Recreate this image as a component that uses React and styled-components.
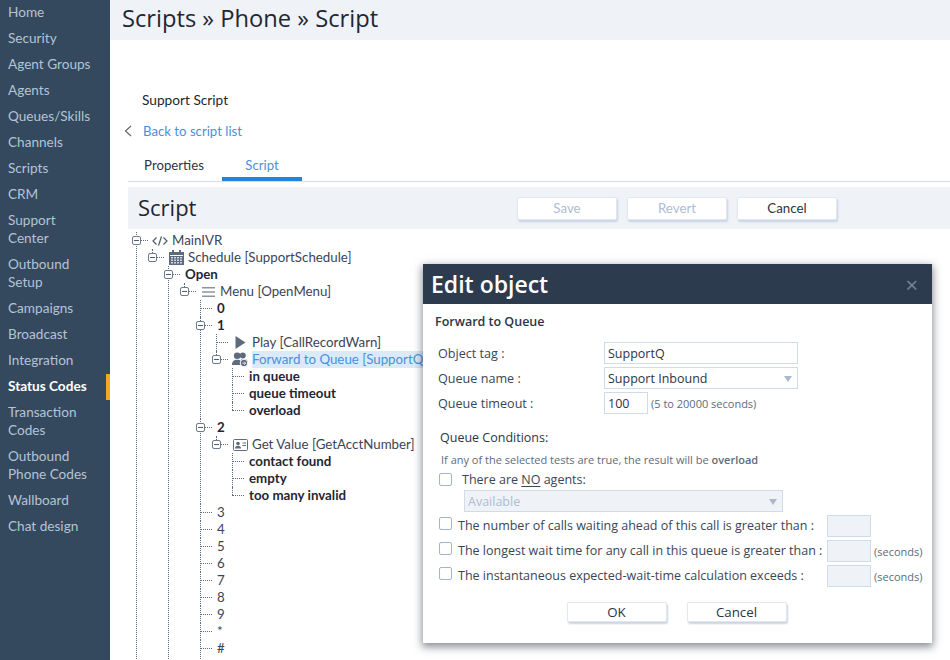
import styled, { createGlobalStyle } from 'styled-components';

const GlobalStyle = createGlobalStyle`
  html, body {
    margin: 0;
    height: 660px;
    overflow: hidden;
    background: #fff;
    font-family: "Open Sans", "Noto Sans", sans-serif;
    color: #2b3445;
  }
  * { box-sizing: border-box; }
`;

const Page = styled.div`
  display: flex;
  width: 950px;
  height: 660px;
  overflow: hidden;
  position: relative;
`;

const Sidebar = styled.nav`
  flex: 0 0 110px;
  background: #34495e;
  font-family: Lato, "Open Sans", sans-serif;
`;

const SideItem = styled.div`
  padding: 3px 8px 5px;
  font-size: 13.6px;
  line-height: 18px;
  color: ${(p) => (p.$active ? '#fff' : '#b4c3d6')};
  font-weight: ${(p) => (p.$active ? 700 : 400)};
  border-right: 4px solid ${(p) => (p.$active ? '#f5a623' : 'transparent')};
`;

const Main = styled.main`
  flex: 1;
  min-width: 0;
  font-family: Lato, "Open Sans", sans-serif;
`;

const Header = styled.header`
  height: 40px;
  background: #eff2f7;
  padding-left: 12px;
  font-family: "Open Sans", sans-serif;
  font-size: 23.7px;
  line-height: 37px;
  color: #1f2733;
`;

const Content = styled.div`
  padding: 51px 0 0 18px;
`;

const ScriptName = styled.div`
  font-size: 13.7px;
  line-height: 18px;
  margin-left: 14px;
  color: #1f2733;
`;

const BackLink = styled.a`
  display: flex;
  align-items: center;
  gap: 11px;
  margin: 13px 0 0 -4px;
  font-size: 13.2px;
  line-height: 18px;
  color: #4a8fe0;
`;

const Tabs = styled.div`
  display: flex;
  gap: 8px;
  margin-top: 12px;
  padding-left: 6px;
  height: 30px;
  border-bottom: 1px solid #d5dce6;
`;

const Tab = styled.div`
  width: 80px;
  height: 29px;
  text-align: center;
  font-size: 13.2px;
  line-height: 27px;
  color: ${(p) => (p.$active ? '#4a8fe0' : '#2b3445')};
  border-bottom: 4px solid ${(p) => (p.$active ? '#2185e0' : 'transparent')};
`;

const ScriptBar = styled.div`
  display: flex;
  align-items: center;
  height: 42px;
  margin-top: 5px;
  padding-left: 10px;
  background: #eff2f7;
`;

const ScriptTitle = styled.h2`
  margin: 0 0 3px 0;
  width: 379px;
  font-family: "Open Sans", sans-serif;
  font-size: 22px;
  font-weight: 400;
  color: #1f2733;
`;

const ButtonRow = styled.div`
  display: flex;
  gap: ${(p) => p.$gap || 10}px;
`;

const Button = styled.button`
  width: 100px;
  height: ${(p) => p.$height || 23}px;
  padding: 0;
  border: 1px solid #e3e8ef;
  border-radius: 2px;
  background: #fff;
  box-shadow: 1px 2px 2px #c9d3e2;
  font-family: inherit;
  font-size: 13.3px;
  color: ${(p) => (p.disabled ? '#aebdd2' : '#2b3445')};
`;

const Tree = styled.ul`
  list-style: none;
  margin: 3px 0 0 8px;
  padding: 0;
`;

const Branch = styled.ul`
  list-style: none;
  margin: 0;
  padding: 0 0 0 16px;
`;

const Node = styled.li`
  position: relative;
  padding-bottom: ${(p) => (p.$tail ? '12px' : '0')};

  &::before {
    content: '';
    position: absolute;
    left: 0;
    top: 0;
    bottom: ${(p) => (p.$last ? 'auto' : '0')};
    height: ${(p) => (p.$last ? '8px' : 'auto')};
    border-left: 1px dotted #5d6b7c;
  }
`;

const Row = styled.div`
  position: relative;
  display: flex;
  align-items: center;
  height: 17px;
  padding-left: 17px;
  white-space: nowrap;

  &::after {
    content: '';
    position: absolute;
    left: 0;
    top: 8px;
    width: 12px;
    border-top: 1px dotted #5d6b7c;
  }
`;

const Toggle = styled.span`
  position: absolute;
  z-index: 1;
  left: -4px;
  top: 4px;
  width: 9px;
  height: 9px;
  background: #fff;
  border: 1px solid #6d7b8c;
  border-radius: 2px;

  &::after {
    content: '';
    position: absolute;
    left: 1px;
    right: 1px;
    top: 3px;
    border-top: 1px solid #4e5b6b;
  }
`;

const IconSlot = styled.span`
  display: flex;
  align-items: center;
  justify-content: center;
  flex: 0 0 16px;
  margin-right: 4px;
  margin-left: -1px;
`;

const Label = styled.span`
  font-size: 13.3px;
  line-height: 17px;
  font-weight: ${(p) => (p.$bold ? 700 : 400)};
  color: ${(p) => (p.$selected ? '#4a8fe0' : p.$bold ? '#1f2733' : '#3a4556')};
  background: ${(p) => (p.$selected ? '#dbe9f8' : 'transparent')};
`;

const Modal = styled.section`
  position: absolute;
  left: 423px;
  top: 264px;
  width: 509px;
  height: 379px;
  background: #fff;
  box-shadow: 0 3px 8px 1px rgba(40, 50, 65, 0.55);
`;

const ModalHeader = styled.header`
  display: flex;
  align-items: center;
  justify-content: space-between;
  height: 40px;
  padding: 0 14px 0 8px;
  background: #2c3b4e;
  color: #fff;
  font-size: 23px;
  font-weight: 600;
`;

const CloseMark = styled.span`
  font-size: 22px;
  font-weight: 400;
  color: #76869a;
`;

const ModalBody = styled.div`
  padding: 9px 12px 0;
`;

const ModalTitle = styled.h3`
  margin: 0 0 12px;
  font-size: 12.5px;
  line-height: 17px;
  font-weight: 600;
  color: #2b3445;
`;

const FieldRow = styled.div`
  display: flex;
  align-items: center;
  height: 22px;
  margin: 0 0 3px 3px;
`;

const FieldLabel = styled.label`
  flex: 0 0 166px;
  font-size: 12.6px;
  color: #3a4556;
`;

const TextField = styled.input`
  width: ${(p) => p.$width}px;
  height: 22px;
  padding: 0 3px;
  border: 1px solid #d0dbe8;
  background: ${(p) => (p.disabled ? '#eff2f7' : '#fff')};
  font-family: inherit;
  font-size: 12.5px;
  color: #2b3445;
`;

const SelectBox = styled.div`
  position: relative;
  width: ${(p) => p.$width}px;
  height: 22px;
  padding: 0 3px;
  border: 1px solid #d0dbe8;
  background: ${(p) => (p.$disabled ? '#eff2f7' : '#fff')};
  font-size: 12.5px;
  line-height: 22px;
  color: ${(p) => (p.$disabled ? '#aebdd2' : '#2b3445')};

  &::after {
    content: '';
    position: absolute;
    right: 5px;
    top: 8px;
    border-left: 4px solid transparent;
    border-right: 4px solid transparent;
    border-top: 6px solid #a9b8cc;
  }
`;

const Hint = styled.span`
  margin-left: 3px;
  font-size: 11px;
  color: #5d6b7c;
`;

const ConditionsTitle = styled.div`
  margin: 15px 0 0 5px;
  font-size: 12.5px;
  line-height: 17px;
  color: #2b3445;
`;

const ConditionsNote = styled.div`
  margin: 7px 0 0 6px;
  font-size: 11px;
  line-height: 14px;
  color: #5d6b7c;

  b {
    font-weight: 600;
  }
`;

const Check = styled.span`
  display: block;
  width: 13px;
  height: 13px;
  border: 1px solid #a3b5cc;
  border-radius: 2px;
  background: #fff;
`;

const AgentRow = styled.div`
  display: flex;
  align-items: center;
  gap: 10px;
  height: 18px;
  margin: 3px 0 0 4px;
  font-size: 12.5px;
  color: #3a4556;

  u {
    text-underline-offset: 2px;
  }
`;

const AgentSelect = styled.div`
  margin: 2px 0 3px 29px;
`;

const ConditionGrid = styled.div`
  display: grid;
  grid-template-columns: 19px 369px 44px auto;
  grid-auto-rows: 22px;
  row-gap: 3px;
  align-items: center;
  margin-left: 4px;
  font-size: 12.5px;
  color: #3a4556;
  white-space: nowrap;
`;

const CheckCell = styled.span`
  align-self: start;
  padding-top: 2px;
`;

const ConditionText = styled.span`
  margin-bottom: 2px;
`;

const ModalActions = styled.div`
  display: flex;
  justify-content: center;
  margin: 15px 2px 0 0;
`;

const CodeIcon = () => (
  <svg width="16" height="12" viewBox="0 0 16 12" fill="none" stroke="#4e5b6b" strokeWidth="1.2">
    <path d="M4.5 2.5 1 6l3.5 3.5M11.5 2.5 15 6l-3.5 3.5M9.5 1.5l-3 9" />
  </svg>
);

const CalendarIcon = () => (
  <svg width="15" height="15" viewBox="0 0 15 15">
    <path fill="#5d6b7c" d="M0 2h15v13H0z" />
    <path fill="#5d6b7c" d="M3 0h2v3H3zM10 0h2v3h-2z" />
    <path fill="#fff" d="M1 5h13v1H1z" />
    <path
      fill="#cfd6df"
      d="M2 7h2v1.5H2zM5 7h2v1.5H5zM8 7h2v1.5H8zM11 7h2v1.5h-2zM2 9.5h2V11H2zM5 9.5h2V11H5zM8 9.5h2V11H8zM11 9.5h2V11h-2zM2 12h2v1.5H2zM5 12h2v1.5H5zM8 12h2v1.5H8zM11 12h2v1.5h-2z"
    />
  </svg>
);

const MenuIcon = () => (
  <svg width="13" height="10" viewBox="0 0 13 10" fill="#8a95a1">
    <path d="M0 0h13v1.6H0zM0 4.2h13v1.6H0zM0 8.4h13V10H0z" />
  </svg>
);

const PlayIcon = () => (
  <svg width="11" height="13" viewBox="0 0 11 13" fill="#5d6b7c">
    <path d="M.5 0l10 6.5L.5 13z" />
  </svg>
);

const QueueIcon = () => (
  <svg width="16" height="15" viewBox="0 0 16 15" fill="#5d6b7c">
    <circle cx="5.2" cy="3.8" r="3.3" />
    <path d="M0 13c0-3.6 2-5.2 5.2-5.2S10.5 9.4 10.5 13z" />
    <circle cx="10.8" cy="3.5" r="3" />
    <path d="M9 7h3.2c2.4 0 3.3 1 3.4 3H11.5z" />
    <circle cx="12" cy="11" r="3.8" stroke="#fff" />
    <path d="M10.2 11.2h3.4M12.2 9.6l1.5 1.6-1.5 1.6" stroke="#fff" fill="none" strokeWidth="0.8" />
  </svg>
);

const CardIcon = () => (
  <svg width="15" height="12" viewBox="0 0 15 12">
    <rect x="0.5" y="0.5" width="14" height="11" rx="1" fill="#fff" stroke="#5d6b7c" />
    <circle cx="5" cy="4.5" r="1.8" fill="#5d6b7c" />
    <path fill="#5d6b7c" d="M2 9.5c0-2 1-2.8 3-2.8s3 .8 3 2.8zM9.5 3.5H13v1H9.5zM9.5 6H13v1H9.5z" />
  </svg>
);

const ChevronLeft = () => (
  <svg width="8" height="12" viewBox="0 0 8 12" fill="none" stroke="#5d6b7c" strokeWidth="1.2">
    <path d="M7 1 1.5 6 7 11" />
  </svg>
);

const navItems = [
  ['Home'],
  ['Security'],
  ['Agent Groups'],
  ['Agents'],
  ['Queues/Skills'],
  ['Channels'],
  ['Scripts'],
  ['CRM'],
  ['Support', 'Center'],
  ['Outbound', 'Setup'],
  ['Campaigns'],
  ['Broadcast'],
  ['Integration'],
  ['Status Codes'],
  ['Transaction', 'Codes'],
  ['Outbound', 'Phone Codes'],
  ['Wallboard'],
  ['Chat design'],
];

const leaf = (label) => ({ label, bold: true });

const scriptTree = {
  label: 'MainIVR',
  icon: <CodeIcon />,
  children: [
    {
      label: 'Schedule [SupportSchedule]',
      icon: <CalendarIcon />,
      last: true,
      children: [
        {
          label: 'Open',
          bold: true,
          children: [
            {
              label: 'Menu [OpenMenu]',
              icon: <MenuIcon />,
              last: true,
              children: [
                leaf('0'),
                {
                  ...leaf('1'),
                  children: [
                    { label: 'Play [CallRecordWarn]', icon: <PlayIcon /> },
                    {
                      label: 'Forward to Queue [SupportQ]',
                      icon: <QueueIcon />,
                      selected: true,
                      last: true,
                      children: [
                        leaf('in queue'),
                        leaf('queue timeout'),
                        { ...leaf('overload'), last: true },
                      ],
                    },
                  ],
                },
                {
                  ...leaf('2'),
                  children: [
                    {
                      label: 'Get Value [GetAcctNumber]',
                      icon: <CardIcon />,
                      last: true,
                      children: [
                        leaf('contact found'),
                        leaf('empty'),
                        { ...leaf('too many invalid'), last: true },
                      ],
                    },
                  ],
                },
                ...['3', '4', '5', '6', '7', '8', '9', '*'].map((label) => ({ label })),
                { label: '#', tail: true },
              ],
            },
          ],
        },
      ],
    },
  ],
};

const TreeNode = ({ node }) => (
  <Node $last={node.last} $tail={node.tail}>
    <Row>
      {node.children && <Toggle />}
      {node.icon && <IconSlot>{node.icon}</IconSlot>}
      <Label $bold={node.bold} $selected={node.selected}>
        {node.label}
      </Label>
    </Row>
    {node.children && (
      <Branch>
        {node.children.map((child) => (
          <TreeNode key={child.label} node={child} />
        ))}
      </Branch>
    )}
  </Node>
);

const conditions = [
  { text: 'The number of calls waiting ahead of this call is greater than :' },
  { text: 'The longest wait time for any call in this queue is greater than :', seconds: true },
  { text: 'The instantaneous expected-wait-time calculation exceeds :', seconds: true },
];

const ConditionRow = ({ condition }) => (
  <>
    <CheckCell>
      <Check />
    </CheckCell>
    <ConditionText>{condition.text}</ConditionText>
    <TextField $width={44} disabled />
    {condition.seconds ? <Hint>(seconds)</Hint> : <span />}
  </>
);

export default function App() {
  return (
    <Page>
      <GlobalStyle />
      <Sidebar>
        {navItems.map((lines) => (
          <SideItem key={lines.join(' ')} $active={lines[0] === 'Status Codes'}>
            {lines.map((line) => (
              <div key={line}>{line}</div>
            ))}
          </SideItem>
        ))}
      </Sidebar>
      <Main>
        <Header>Scripts » Phone » Script</Header>
        <Content>
          <ScriptName>Support Script</ScriptName>
          <BackLink>
            <ChevronLeft />
            Back to script list
          </BackLink>
          <Tabs>
            <Tab>Properties</Tab>
            <Tab $active>Script</Tab>
          </Tabs>
          <ScriptBar>
            <ScriptTitle>Script</ScriptTitle>
            <ButtonRow>
              <Button disabled>Save</Button>
              <Button disabled>Revert</Button>
              <Button>Cancel</Button>
            </ButtonRow>
          </ScriptBar>
          <Tree>
            <TreeNode node={scriptTree} />
          </Tree>
        </Content>
      </Main>
      <Modal>
        <ModalHeader>
          Edit object
          <CloseMark>×</CloseMark>
        </ModalHeader>
        <ModalBody>
          <ModalTitle>Forward to Queue</ModalTitle>
          <FieldRow>
            <FieldLabel>Object tag :</FieldLabel>
            <TextField $width={194} defaultValue="SupportQ" />
          </FieldRow>
          <FieldRow>
            <FieldLabel>Queue name :</FieldLabel>
            <SelectBox $width={194}>Support Inbound</SelectBox>
          </FieldRow>
          <FieldRow>
            <FieldLabel>Queue timeout :</FieldLabel>
            <TextField $width={44} defaultValue="100" />
            <Hint>(5 to 20000 seconds)</Hint>
          </FieldRow>
          <ConditionsTitle>Queue Conditions:</ConditionsTitle>
          <ConditionsNote>
            If any of the selected tests are true, the result will be <b>overload</b>
          </ConditionsNote>
          <AgentRow>
            <Check />
            <span>
              There are <u>NO</u> agents:
            </span>
          </AgentRow>
          <AgentSelect>
            <SelectBox $width={319} $disabled>
              Available
            </SelectBox>
          </AgentSelect>
          <ConditionGrid>
            {conditions.map((condition) => (
              <ConditionRow key={condition.text} condition={condition} />
            ))}
          </ConditionGrid>
          <ModalActions>
            <ButtonRow $gap={20}>
              <Button $height={20}>OK</Button>
              <Button $height={20}>Cancel</Button>
            </ButtonRow>
          </ModalActions>
        </ModalBody>
      </Modal>
    </Page>
  );
}
